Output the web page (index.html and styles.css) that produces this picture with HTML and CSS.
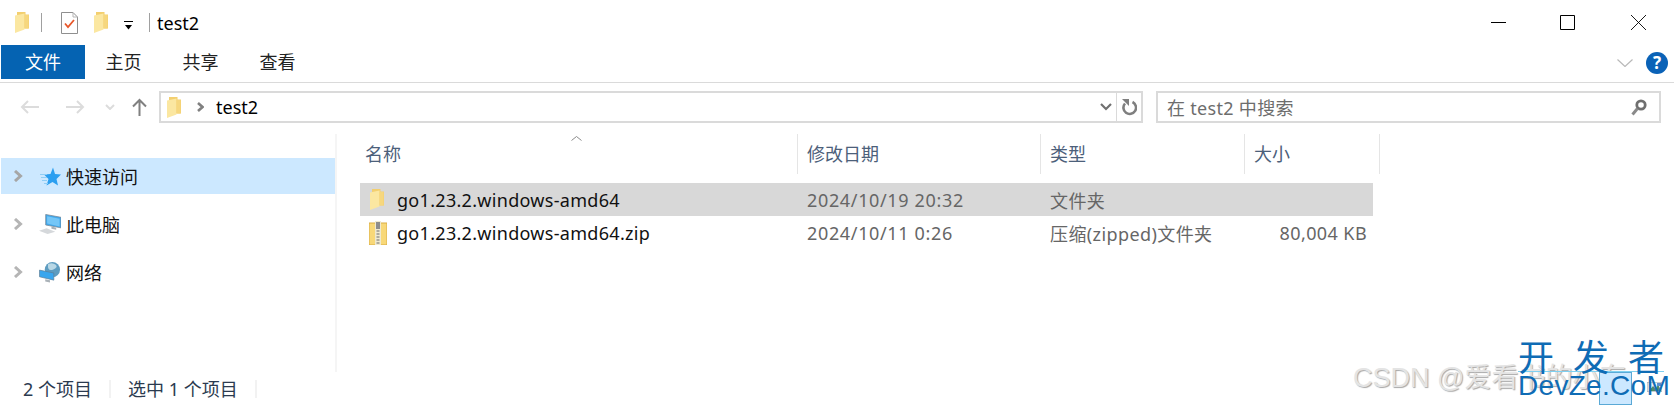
FILE: index.html
```html
<!DOCTYPE html>
<html lang="zh-CN">
<head>
  <meta charset="UTF-8" />
  <title>test2</title>
  <link rel="stylesheet" href="styles.css">
</head>
<body>
  <svg class="defs" width="0" height="0">
    <symbol id="folder" viewBox="0 0 14 21">
      <path d="M2 0H10.500V2.500H14V16.500H2Z" fill="#f3cf6f"/>
      <path d="M0 3.500L9.500 1.500V17.500L0 21Z" fill="#fbe7a1"/>
      <path d="M9.500 3H13.500V16.500H9.500Z" fill="#f6d77e"/>
    </symbol>
  </svg>

  <header class="titlebar">
    <svg class="qat-folder"><use href="#folder"/></svg>
    <span class="qat-sep"></span>
    <svg class="qat-doc" viewBox="0 0 17 22">
      <path d="M.5.500H12L16.500 5V21.500H.5Z" fill="#fff" stroke="#8f8f8f"/>
      <path d="M12 .5V5H16.500" fill="none" stroke="#b5b5b5"/>
      <path d="M4 11.500L7 15L13 8" fill="none" stroke="#e8572a" stroke-width="1.800"/>
    </svg>
    <svg class="qat-folder2"><use href="#folder"/></svg>
    <svg class="qat-drop" viewBox="0 0 9 9">
      <path d="M0 .5H9" stroke="#000" stroke-width="1"/>
      <path d="M1 4H8L4.500 8.500Z" fill="#000"/>
    </svg>
    <span class="qat-sep qat-sep-last"></span>
    <span class="title-text">test2</span>
    <div class="win-buttons">
      <svg class="win-min" viewBox="0 0 15 1"><path d="M0 .5H15" stroke="#000"/></svg>
      <svg class="win-max" viewBox="0 0 15 15"><path d="M.5.500H14.500V14.500H.5Z" fill="none" stroke="#000"/></svg>
      <svg class="win-close" viewBox="0 0 15 15"><path d="M0 0L15 15M15 0L0 15" stroke="#000" stroke-width=".9"/></svg>
    </div>
  </header>

  <nav class="ribbon">
    <a class="tab tab-file">文件</a>
    <a class="tab">主页</a>
    <a class="tab">共享</a>
    <a class="tab">查看</a>
    <div class="ribbon-right">
      <svg class="ribbon-collapse" viewBox="0 0 16 8"><path d="M.5.500L8 7.500L15.500.5" fill="none" stroke="#b9b9b9" stroke-width="1.200"/></svg>
      <span class="help">?</span>
    </div>
  </nav>

  <div class="addressrow">
    <svg class="nav-arrow" viewBox="0 0 19 14"><path d="M19 7H2M8 1L2 7L8 13" fill="none" stroke="#dcdcdc" stroke-width="2"/></svg>
    <svg class="nav-arrow nav-forward" viewBox="0 0 19 14"><path d="M0 7H17M11 1L17 7L11 13" fill="none" stroke="#dcdcdc" stroke-width="2"/></svg>
    <svg class="nav-recent" viewBox="0 0 10 6"><path d="M1 1L5 5L9 1" fill="none" stroke="#dcdcdc" stroke-width="2"/></svg>
    <svg class="nav-up" viewBox="0 0 15 18"><path d="M7.500 18V2M1 8.500L7.500 2L14 8.500" fill="none" stroke="#808080" stroke-width="2"/></svg>
    <div class="address">
      <svg class="address-folder"><use href="#folder"/></svg>
      <svg class="address-chevron" viewBox="0 0 7 10"><path d="M1 1L5.500 5L1 9" fill="none" stroke="#808080" stroke-width="2.600"/></svg>
      <span class="address-text">test2</span>
      <svg class="address-drop" viewBox="0 0 12 8"><path d="M1 1L6 6L11 1" fill="none" stroke="#707070" stroke-width="2.200"/></svg>
      <div class="address-refresh">
        <svg viewBox="0 0 16 17"><path d="M11.500 3A6.300 6.300 0 1 1 4 4.500" fill="none" stroke="#7f7f7f" stroke-width="2.600"/><path d="M1 0H8V7Z" fill="#7f7f7f"/></svg>
      </div>
    </div>
    <div class="search">
      <span class="search-text">在 test2 中搜索</span>
      <svg class="search-icon" viewBox="0 0 16 17"><circle cx="10" cy="6" r="4.200" fill="none" stroke="#6f6f6f" stroke-width="2.800"/><path d="M6.500 9.500L1.500 15.500" stroke="#8a8a8a" stroke-width="3"/></svg>
    </div>
  </div>

  <main class="content">
    <aside class="sidebar">
      <div class="tree-item tree-active">
        <svg class="tree-chevron" viewBox="0 0 10 12"><path d="M2 1L7.500 6L2 11" fill="none" stroke="#a6a6a6" stroke-width="3"/></svg>
        <svg class="tree-icon" viewBox="0 0 22 20">
          <path d="M14 1L16 7.500L22 8L17.500 12.500L19 19L13.500 15.500L7.500 19L9.500 12.500L5 8L11.500 7.500Z" fill="#2b9ff0"/>
          <path d="M1 8H8M2 11H8M3 14H8M5 17H9" stroke="#8fcdf5" stroke-width="1"/>
        </svg>
        <span>快速访问</span>
      </div>
      <div class="tree-item">
        <svg class="tree-chevron" viewBox="0 0 10 12"><path d="M2 1L7.500 6L2 11" fill="none" stroke="#b5b5b5" stroke-width="3"/></svg>
        <svg class="tree-icon" viewBox="0 0 23 21">
          <path d="M7 0L23 3V14L7 11Z" fill="#3fa9ee" stroke="#7a8794" stroke-width=".8"/>
          <path d="M8.500 2L21.500 4.500V12.500L8.500 9.500Z" fill="#74c6f7"/>
          <path d="M13 12.500L18 14V16L13 15Z" fill="#a9b0b6"/>
          <path d="M0 17L8 14.500L17 18L9 20.500Z" fill="#d5d8db"/>
        </svg>
        <span>此电脑</span>
      </div>
      <div class="tree-item">
        <svg class="tree-chevron" viewBox="0 0 10 12"><path d="M2 1L7.500 6L2 11" fill="none" stroke="#b5b5b5" stroke-width="3"/></svg>
        <svg class="tree-icon" viewBox="0 0 22 22">
          <circle cx="13.500" cy="8" r="8" fill="#5d9cc0"/>
          <path d="M9 2Q14 0 17 3T14 8T9 2Z" fill="#b9d8e6"/>
          <path d="M0 8.500L15 11.500V19L0 15.500Z" fill="#39a6ee" stroke="#5f7e94" stroke-width=".7"/>
          <path d="M6 18L11 19V21.500L6 20.500Z" fill="#aab2b8"/>
        </svg>
        <span>网络</span>
      </div>
    </aside>

    <section class="files">
      <svg class="sort-arrow" viewBox="0 0 11 5"><path d="M.5 4.500L5.500.5L10.500 4.500" fill="none" stroke="#8a8a8a"/></svg>
      <div class="file-head">
        <div class="col-head">名称</div>
        <div class="col-head">修改日期</div>
        <div class="col-head">类型</div>
        <div class="col-head">大小</div>
      </div>
      <div class="file-row file-selected">
        <div class="file-name">
          <svg class="file-icon"><use href="#folder"/></svg>
          <span>go1.23.2.windows-amd64</span>
        </div>
        <div class="file-meta file-date">2024/10/19 20:32</div>
        <div class="file-meta">文件夹</div>
        <div class="file-meta file-size"></div>
      </div>
      <div class="file-row">
        <div class="file-name">
          <svg class="zip-icon" viewBox="0 0 18 24">
            <path d="M0 2H18V24H0Z" fill="#f8d878" stroke="#d9ad45" stroke-width="1"/>
            <path d="M6 0H12V24H6Z" fill="#efe9cf"/>
            <path d="M7 1H11V8H7Z" fill="#8d8d8d"/>
            <path d="M7.500 10H10.500M7.500 13H10.500M7.500 16H10.500M7.500 19H10.500M7.500 22H10.500" stroke="#6f6f6f" stroke-width="1.200"/>
          </svg>
          <span>go1.23.2.windows-amd64.zip</span>
        </div>
        <div class="file-meta file-date">2024/10/11 0:26</div>
        <div class="file-meta">压缩(zipped)文件夹</div>
        <div class="file-meta file-size">80,004 KB</div>
      </div>
    </section>
  </main>

  <footer class="statusbar">
    <span class="status-cell status-count">2 个项目</span>
    <span class="status-cell status-selected">选中 1 个项目</span>
  </footer>

  <div class="wm-csdn">CSDN @爱看书的小东</div>
  <div class="wm-thumb"></div>
  <svg class="wm-pic" viewBox="0 0 15 10">
    <path d="M0 0H15V10H0Z" fill="#eef3f6" stroke="#9aa5ad"/>
    <path d="M2 9L6 4L9 7L11 2L14 9Z" fill="#4f8a6b"/>
    <path d="M10 1H14V4H10Z" fill="#5b8fd0"/>
  </svg>
  <div class="wm-devze">
    <div class="wm-cn"><span>开</span><span>发</span><span>者</span></div>
    <div class="wm-en">DevZe.CoM</div>
  </div>
</body>
</html>
```
FILE: styles.css
```css
* {
  box-sizing: border-box;
}
html, body {
  margin: 0;
  padding: 0;
}
body {
  position: relative;
  width: 1674px;
  height: 407px;
  overflow: hidden;
  background: #fff;
  color: #000;
  font-family: "Noto Sans", "Noto Sans CJK SC", sans-serif;
  font-size: 18px;
}
svg {
  display: block;
  flex: none;
}
.defs {
  position: absolute;
}

/* title bar */
.titlebar {
  display: flex;
  align-items: center;
  height: 45px;
  padding-left: 15px;
}
.qat-folder {
  width: 14px;
  height: 21px;
}
.qat-sep {
  width: 1px;
  height: 19px;
  margin-left: 12px;
  background: #a0a0a0;
}
.qat-doc {
  width: 17px;
  height: 22px;
  margin-left: 19px;
}
.qat-folder2 {
  width: 14px;
  height: 21px;
  margin-left: 16px;
}
.qat-drop {
  width: 9px;
  height: 9px;
  margin: 6px 0 0 16px;
}
.qat-sep-last {
  margin-left: 16px;
}
.title-text {
  margin-left: 7px;
}
.win-buttons {
  display: flex;
  align-items: center;
  margin-left: auto;
  padding-right: 28px;
}
.win-min {
  width: 15px;
  height: 1px;
}
.win-max {
  width: 15px;
  height: 15px;
  margin-left: 54px;
}
.win-close {
  width: 15px;
  height: 15px;
  margin-left: 56px;
}

/* ribbon */
.ribbon {
  display: flex;
  align-items: flex-start;
  height: 38px;
  padding-left: 1px;
  border-bottom: 1px solid #dadada;
}
.tab {
  width: 77px;
  height: 34px;
  line-height: 34px;
  text-align: center;
  color: #222;
}
.tab-file {
  width: 84px;
  background: #0563b2;
  color: #fff;
}
.ribbon-right {
  display: flex;
  align-items: center;
  gap: 13px;
  margin-left: auto;
  padding: 7px 6px 0 0;
}
.ribbon-collapse {
  width: 16px;
  height: 8px;
}
.help {
  width: 22px;
  height: 22px;
  border-radius: 50%;
  background: #0a62b7;
  color: #fff;
  font-size: 17px;
  font-weight: 700;
  line-height: 22px;
  text-align: center;
}

/* address row */
.addressrow {
  display: flex;
  align-items: center;
  height: 41px;
  padding: 8px 13px 1px 20px;
}
.nav-arrow {
  width: 19px;
  height: 14px;
}
.nav-forward {
  margin-left: 27px;
}
.nav-recent {
  width: 10px;
  height: 6px;
  margin-left: 20px;
}
.nav-up {
  width: 15px;
  height: 18px;
  margin-left: 17px;
}
.address {
  display: flex;
  align-items: center;
  width: 984px;
  height: 32px;
  margin-left: 12px;
  padding-left: 6px;
  border: 2px solid #dadada;
}
.address-folder {
  width: 14px;
  height: 21px;
}
.address-chevron {
  width: 7px;
  height: 10px;
  margin-left: 16px;
}
.address-text {
  margin-left: 12px;
}
.address-drop {
  width: 12px;
  height: 8px;
  margin-left: auto;
}
.address-refresh {
  display: flex;
  align-items: center;
  justify-content: center;
  width: 25px;
  height: 100%;
  margin-left: 4px;
  border-left: 1px solid #dadada;
}
.address-refresh svg {
  width: 16px;
  height: 17px;
}
.search {
  display: flex;
  align-items: center;
  justify-content: space-between;
  width: 505px;
  height: 32px;
  margin-left: 13px;
  padding: 0 12px 0 9px;
  border: 2px solid #dadada;
  color: #6d6d6d;
  letter-spacing: .3px;
}
.search-icon {
  width: 16px;
  height: 17px;
}

/* sidebar and list */
.content {
  display: flex;
  height: 248px;
  padding-top: 10px;
}
.sidebar {
  width: 337px;
  padding: 24px 0 0 1px;
  border-right: 2px solid #f5f5f5;
  display: flex;
  flex-direction: column;
  gap: 12px;
}
.tree-item {
  display: flex;
  align-items: center;
  height: 36px;
  padding-left: 12px;
  color: #111;
}
.tree-active {
  background: #cce8ff;
}
.tree-chevron {
  width: 10px;
  height: 12px;
}
.tree-icon {
  width: 22px;
  height: 21px;
  margin: 0 5px 0 16px;
}
.files {
  position: relative;
  flex: 1;
  padding-left: 19px;
}
.sort-arrow {
  position: absolute;
  left: 234px;
  top: 2px;
  width: 11px;
  height: 5px;
}
.file-head {
  display: grid;
  grid-template-columns: 442px 243px 204px 135px;
  height: 40px;
}
.col-head {
  padding: 5px 0 0 9px;
  line-height: 30px;
  border-right: 1px solid #e5e5e5;
  color: #4c607a;
}
.file-row {
  display: grid;
  grid-template-columns: 438px 243px 204px 128px;
  align-items: center;
  width: 1013px;
  height: 33px;
  margin-left: 4px;
}
.file-head + .file-row {
  margin-top: 9px;
}
.file-selected {
  background: #d8d8d8;
}
.file-name {
  display: flex;
  align-items: center;
  padding-left: 9px;
  color: #111;
}
.file-name span {
  white-space: nowrap;
  letter-spacing: .3px;
}
.file-icon {
  width: 14px;
  height: 21px;
  margin: 0 13px 0 1px;
}
.zip-icon {
  width: 18px;
  height: 24px;
  margin-right: 10px;
}
.file-meta {
  padding-left: 9px;
  color: #666;
  white-space: nowrap;
  letter-spacing: .4px;
}
.file-date {
  letter-spacing: .65px;
}
.file-size {
  padding: 0 6px 0 0;
  text-align: right;
}

/* status bar */
.statusbar {
  display: flex;
  align-items: center;
  height: 35px;
  padding: 0 0 1px 23px;
  color: #2b3a4f;
}
.status-cell {
  display: block;
  line-height: 18px;
  border-right: 2px solid #f2f2f2;
}
.status-count {
  padding-right: 17px;
}
.status-selected {
  padding: 0 17px;
}

/* watermarks lie over the window */
.wm-csdn {
  position: absolute;
  left: 1353px;
  top: 361px;
  font-family: "Liberation Sans", "Noto Sans CJK SC", sans-serif;
  font-size: 27px;
  line-height: 34px;
  color: #e4e4e4;
  text-shadow: 1px 1px 1px #a8a8a8;
  white-space: nowrap;
}
.wm-thumb {
  position: absolute;
  left: 1599px;
  top: 372px;
  width: 33px;
  height: 33px;
  background: #cce8ff;
  border: 1px solid #5aa9d6;
}
.wm-pic {
  position: absolute;
  left: 1647px;
  top: 382px;
  width: 15px;
  height: 10px;
}
.wm-devze {
  position: absolute;
  left: 1518px;
  top: 342px;
  width: 146px;
  color: #0f6cb5;
}
.wm-cn {
  display: flex;
  justify-content: space-between;
  height: 30px;
  font-size: 36px;
  line-height: 32px;
  border-bottom: 1px solid #7fd0f0;
}
.wm-en {
  font-family: "Liberation Sans", sans-serif;
  font-size: 28px;
  line-height: 27px;
  letter-spacing: .3px;
  white-space: nowrap;
}
```
